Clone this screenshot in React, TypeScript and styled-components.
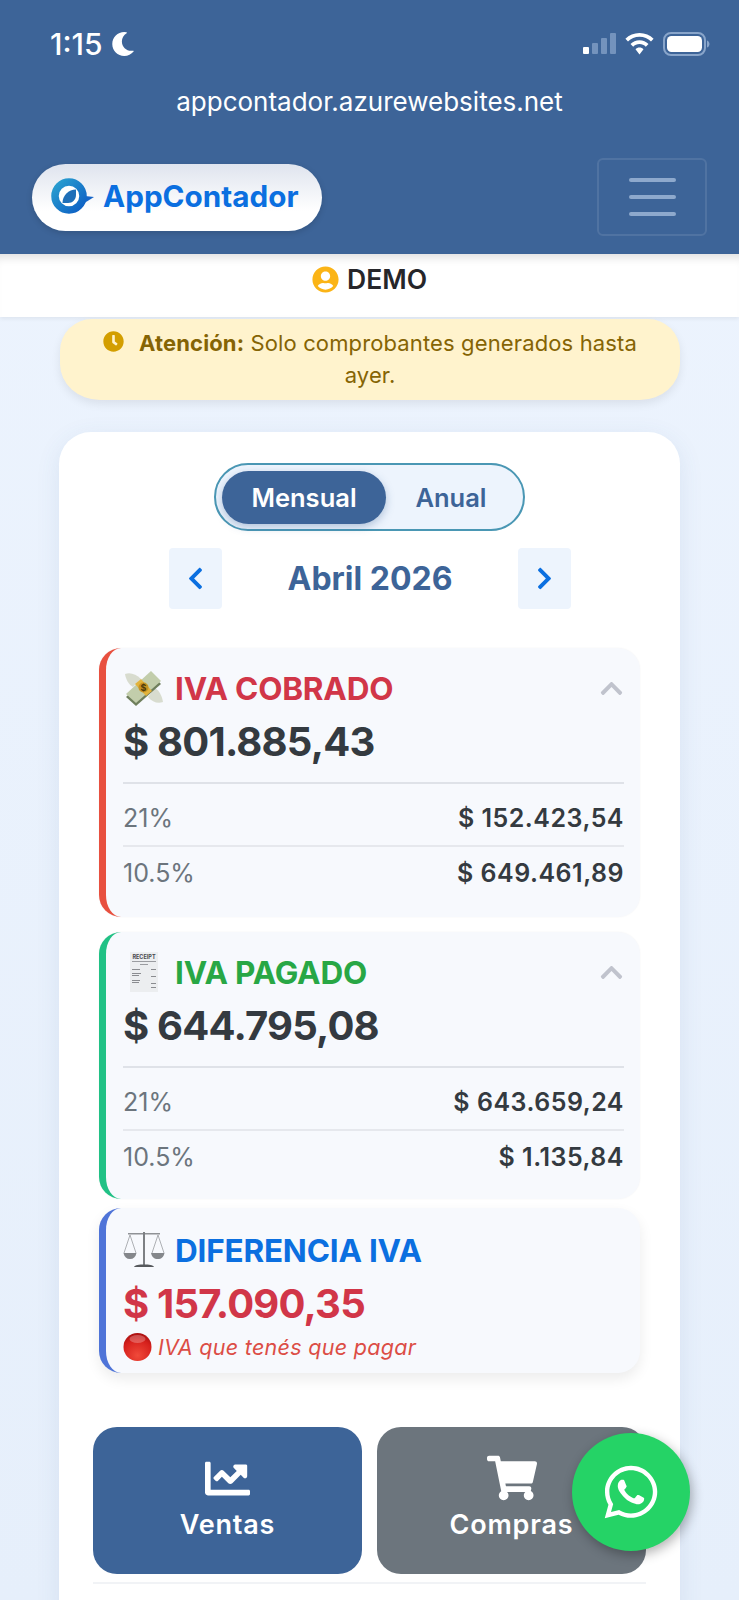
import React, { FC } from 'react';
import styled, { createGlobalStyle } from 'styled-components';
import {
  FaChartLine,
  FaChevronLeft,
  FaChevronRight,
  FaChevronUp,
  FaClock,
  FaMoon,
  FaShoppingCart,
  FaUserCircle,
  FaWhatsapp,
} from 'react-icons/fa';

const GlobalStyle = createGlobalStyle`
  html, body {
    margin: 0;
    padding: 0;
    height: 1600px;
    overflow: hidden;
    background: #eaf2fd;
    font-family: Inter, "Liberation Sans", sans-serif;
  }
  * { box-sizing: border-box; }
`;

const Page = styled.div`
  position: relative;
  width: 739px;
  height: 1600px;
  overflow: hidden;
  background: linear-gradient(180deg, #edf4fe 0%, #e6effb 100%);
`;

/* Header */
const Header = styled.header`
  height: 254px;
  background: #3d6498;
  color: #fff;
  padding: 28px 32px 0;
`;

const StatusBar = styled.div`
  height: 32px;
  display: flex;
  align-items: center;
  justify-content: space-between;
  padding: 0 0 0 18px;
  margin-right: -3px;
`;

const Clock = styled.div`
  display: flex;
  align-items: center;
  gap: 8px;
  font-size: 30px;
  font-weight: 500;
  letter-spacing: 0;
`;

const StatusIcons = styled.div`
  display: flex;
  align-items: center;
  gap: 9px;
`;

const Url = styled.div`
  margin-top: 26px;
  text-align: center;
  font-size: 26px;
  line-height: 32px;
  font-weight: 400;
`;

const NavRow = styled.div`
  margin-top: 40px;
  display: flex;
  align-items: flex-start;
  justify-content: space-between;
`;

const Brand = styled.div`
  margin-top: 6px;
  width: 290px;
  height: 67px;
  border-radius: 34px;
  display: flex;
  align-items: center;
  gap: 8px;
  padding: 0 0 3px 19px;
  background: linear-gradient(180deg, #dfe4ee 0%, #fff 70%);
  box-shadow: 0 2px 6px rgba(0, 0, 0, 0.15);
`;

const BrandName = styled.span`
  color: #0b6fe0;
  font-size: 29.7px;
  font-weight: 700;
`;

const Toggler = styled.div`
  width: 110px;
  height: 78px;
  display: flex;
  flex-direction: column;
  align-items: center;
  justify-content: center;
  gap: 13px;
  border: 2px solid rgba(255, 255, 255, 0.1);
  border-radius: 6px;
`;

const TogglerLine = styled.span`
  width: 47px;
  height: 4px;
  border-radius: 2px;
  background: #8ea9cd;
`;

const UserBar = styled.div`
  height: 63px;
  background: #fff;
  display: flex;
  align-items: center;
  justify-content: center;
  gap: 8px;
  padding-bottom: 13px;
  font-size: 26.5px;
  font-weight: 600;
  color: #26262a;
  box-shadow: inset 0 10px 8px -6px rgba(0, 0, 0, 0.12), 0 2px 4px rgba(0, 0, 0, 0.06);
  svg {
    color: #fbb416;
    font-size: 27px;
  }
`;

const Notice = styled.div`
  margin: 2px 59px 0 60px;
  height: 81px;
  padding: 8px 30px 0;
  background: #fff3cd;
  border-radius: 0 0 40px 40px / 0 0 36px 36px;
  border-top-left-radius: 32px;
  border-top-right-radius: 32px;
  box-shadow: 0 4px 10px rgba(0, 0, 0, 0.08);
  color: #856404;
  font-size: 22px;
  line-height: 32px;
  letter-spacing: 0.13px;
  text-align: center;
  svg {
    color: #d39e00;
    font-size: 21px;
    margin-right: 15px;
    vertical-align: -1px;
  }
  b {
    font-weight: 700;
  }
`;

/* Main panel */
const Panel = styled.main`
  margin: 32px 59px 0;
  padding: 31px 34px 0;
  height: 1200px;
  background: #fff;
  border-radius: 32px;
  box-shadow: 0 6px 24px rgba(61, 100, 152, 0.1);
`;

const ModeSwitch = styled.div`
  width: 311px;
  height: 68px;
  margin: 0 auto;
  padding: 6px 6px;
  display: flex;
  align-items: center;
  border: 2px solid #4a97b4;
  border-radius: 34px;
  background: #edf4fd;
`;

const ModeButton = styled.div<{ $active?: boolean }>`
  height: 53px;
  width: ${(p) => (p.$active ? '164px' : '130px')};
  display: flex;
  align-items: center;
  justify-content: center;
  border-radius: 27px;
  font-size: 25.5px;
  font-weight: 600;
  color: ${(p) => (p.$active ? '#fff' : '#3d6498')};
  background: ${(p) => (p.$active ? '#3d6498' : 'transparent')};
  box-shadow: ${(p) => (p.$active ? '0 3px 8px rgba(61, 100, 152, 0.35)' : 'none')};
`;

const MonthNav = styled.div`
  margin: 17px 75px 0 76px;
  height: 61px;
  display: flex;
  align-items: center;
  justify-content: space-between;
`;

const MonthArrow = styled.div`
  width: 53px;
  height: 61px;
  border-radius: 4px;
  background: #edf4fd;
  color: #0b6fe0;
  font-size: 25px;
  display: flex;
  align-items: center;
  justify-content: center;
`;

const MonthLabel = styled.div`
  font-size: 32px;
  font-weight: 700;
  color: #3d6498;
`;

const SummaryCard = styled.section<{ $accent: string; $shadow?: boolean }>`
  position: relative;
  margin: 0 6px;
  padding: 0 16px 0 17px;
  background: #f7f9fd;
  border-left: 7px solid ${(p) => p.$accent};
  border-radius: 22px;
  box-shadow: ${(p) => (p.$shadow ? '0 6px 14px rgba(0, 0, 0, 0.08)' : '0 0 2px rgba(0, 0, 0, 0.05)')};
`;

const CobradoCard = styled(SummaryCard)`
  margin-top: 39px;
  height: 269px;
  padding-top: 22px;
`;

const PagadoCard = styled(SummaryCard)`
  margin-top: 15px;
  height: 267px;
  padding-top: 22px;
`;

const DiferenciaCard = styled(SummaryCard)`
  margin-top: 9px;
  height: 165px;
  padding-top: 24px;
`;

const CardTitleRow = styled.div`
  height: 36px;
  display: flex;
  align-items: center;
  gap: 6px;
`;

const EmojiBox = styled.span`
  width: 46px;
  height: 40px;
  flex: none;
  display: flex;
  align-items: center;
  justify-content: center;
  margin-left: -2px;
  margin-right: 2px;
`;

const CardTitle = styled.h3<{ $color: string }>`
  margin: 0;
  flex: 1;
  font-size: 31.5px;
  font-weight: 700;
  letter-spacing: -0.2px;
  color: ${(p) => p.$color};
`;

const Caret = styled.span`
  color: #c0c3cd;
  font-size: 25px;
  display: flex;
`;

const Amount = styled.div<{ $color?: string }>`
  margin-top: 11px;
  font-size: 40px;
  line-height: 50px;
  font-weight: 700;
  letter-spacing: -0.8px;
  color: ${(p) => p.$color ?? '#343a40'};
`;

const Breakdown = styled.div`
  margin-top: 15px;
  border-top: 2px solid #dfe2e8;
`;

const BreakdownRow = styled.div`
  height: 61px;
  padding-top: 7px;
  display: flex;
  align-items: center;
  justify-content: space-between;
  font-size: 25px;
  & + & {
    height: 52px;
    padding-top: 2px;
    border-top: 2px solid #e6e8ed;
  }
`;

const Rate = styled.span`
  color: #6c757d;
  font-weight: 400;
`;

const RateValue = styled.span`
  color: #343a40;
  font-weight: 600;
  letter-spacing: 0.5px;
`;

const Hint = styled.div`
  margin-top: 3px;
  display: flex;
  align-items: center;
  gap: 6px;
  font-size: 21.5px;
  line-height: 30px;
  font-style: italic;
  letter-spacing: 0.3px;
  color: #dc4d45;
`;

const Actions = styled.div`
  margin-top: 54px;
  display: grid;
  grid-template-columns: 269px 269px;
  justify-content: space-between;
  padding-bottom: 8px;
  border-bottom: 2px solid #f1f3f6;
`;

const ActionButton = styled.div<{ $bg: string }>`
  height: 147px;
  padding-top: 26px;
  border-radius: 24px;
  background: ${(p) => p.$bg};
  color: #fff;
  display: flex;
  flex-direction: column;
  align-items: center;
  gap: 6px;
  font-size: 27px;
  line-height: 32px;
  font-weight: 600;
  letter-spacing: 0.8px;
`;

const ActionIcon = styled.span`
  height: 50px;
  display: flex;
  align-items: center;
`;

const WhatsappFab = styled.div`
  position: absolute;
  left: 572px;
  top: 1433px;
  width: 118px;
  height: 118px;
  border-radius: 50%;
  background: #25d366;
  color: #fff;
  font-size: 60px;
  display: flex;
  align-items: center;
  justify-content: center;
  box-shadow: 2px 4px 12px rgba(0, 0, 0, 0.3);
`;

/* Drawings */
const SignalIcon: FC = () => (
  <svg width="33" height="22" viewBox="0 0 33 22">
    <rect x="0" y="14" width="6" height="7" rx="1" fill="#fff" />
    <rect x="9" y="10" width="6" height="11" rx="1" fill="#7493bd" />
    <rect x="18" y="5" width="6" height="16" rx="1" fill="#7493bd" />
    <rect x="27" y="0" width="6" height="21" rx="1" fill="#7493bd" />
  </svg>
);

const WifiIcon: FC = () => (
  <svg width="29" height="22" viewBox="0 0 29 22" fill="#fff">
    <path d="M14.5 0C9 0 4 2.2.4 5.8l2.6 2.7C6 5.6 10 3.8 14.5 3.8s8.500 1.800 11.500 4.700l2.600-2.700C25 2.200 20 0 14.500 0z" />
    <path d="M14.500 7.300c-3.500 0-6.700 1.400-9 3.700l2.700 2.700c1.600-1.600 3.800-2.600 6.300-2.600s4.700 1 6.300 2.600l2.700-2.700c-2.300-2.300-5.500-3.700-9-3.700z" />
    <path d="M14.500 14.500c-1.600 0-3 .6-4 1.700l4 5.300 4-5.300c-1-1.100-2.400-1.700-4-1.700z" />
  </svg>
);

const BatteryIcon: FC = () => (
  <svg width="47" height="24" viewBox="0 0 47 24">
    <rect x="1" y="1" width="41" height="22" rx="7" fill="none" stroke="#89a5ca" strokeWidth="2" />
    <rect x="4" y="4" width="35" height="16" rx="4.500" fill="#fff" />
    <path d="M44 8.500c1.600.5 2.500 2 2.500 3.500s-.9 3-2.500 3.500z" fill="#89a5ca" />
  </svg>
);

const LogoIcon: FC = () => (
  <svg width="44" height="36" viewBox="0 0 44 36">
    <defs>
      <linearGradient id="logoRing" x1="0" y1="0" x2="1" y2="1">
        <stop offset="0" stopColor="#2aa0d0" />
        <stop offset="1" stopColor="#0d5fc4" />
      </linearGradient>
    </defs>
    <path d="M27 29l16-10-9-1z" fill="#1565c8" />
    <circle cx="18" cy="18" r="14" fill="#fff" stroke="url(#logoRing)" strokeWidth="7.500" />
    <path d="M25 11.500v5.500c0 4.500-3.500 8-8 8h-5.500c0-7.500 6-13.500 13.500-13.500z" fill="#1f6fb8" />
  </svg>
);

const MoneyWingsEmoji: FC = () => (
  <svg width="42" height="38" viewBox="0 0 42 38">
    <path d="M2 5c5-2 11 0 16 5l-8 8C6 16 3 11 2 5z" fill="#d8dccf" />
    <path d="M40 33c-5 2-11 0-15-5l7-9c4 2 7 8 8 14z" fill="#d8dccf" />
    <path d="M3 28L28 5l10 10-25 22z" fill="#6f7f5c" />
    <path d="M3 25L28 2l10 10-25 22z" fill="#c2cdab" />
    <path d="M12 15l11 12 6-5-11-12z" fill="#e2b33c" />
    <circle cx="20.500" cy="18.500" r="5" fill="#c69222" />
    <text x="20.500" y="22" fontSize="9" fontWeight="700" fill="#4d3a0b" textAnchor="middle" fontFamily="Inter">$</text>
  </svg>
);

const ReceiptEmoji: FC = () => (
  <svg width="30" height="40" viewBox="0 0 28 40">
    <rect x="0" y="0" width="28" height="40" fill="#eceef0" />
    <text x="14" y="7" fontSize="5.500" fontWeight="700" fill="#4a4c50" textAnchor="middle" fontFamily="Inter">RECEIPT</text>
    <rect x="2" y="9" width="24" height="1" fill="#9a9ca0" />
    <rect x="10" y="12" width="8" height="1" fill="#9a9ca0" />
    <rect x="2" y="17" width="8" height="1" fill="#8a8c90" />
    <rect x="21" y="17" width="5" height="1" fill="#8a8c90" />
    <rect x="2" y="21" width="9" height="1" fill="#8a8c90" />
    <rect x="2" y="23" width="7" height="1" fill="#8a8c90" />
    <rect x="21" y="24" width="5" height="1" fill="#8a8c90" />
    <rect x="2" y="28" width="8" height="1" fill="#8a8c90" />
    <rect x="2" y="30" width="7" height="1" fill="#8a8c90" />
    <rect x="21" y="31" width="5" height="1" fill="#8a8c90" />
    <rect x="21" y="35" width="5" height="1" fill="#8a8c90" />
  </svg>
);

const ScaleEmoji: FC = () => (
  <svg width="42" height="38" viewBox="0 0 42 38" fill="none" stroke="#9a9da1" strokeWidth="0.800">
    <rect x="5" y="2" width="32" height="1.500" fill="#8f9296" stroke="none" />
    <rect x="20" y="1" width="2" height="33" fill="#7d8084" stroke="none" />
    <path d="M7 4L1 22M7 4l6 18M35 4l-6 18M35 4l6 18" />
    <path d="M0.500 22h13c-1 4-3 6-6.500 6S1.500 26 .5 22z" fill="#84878b" stroke="none" />
    <path d="M28 22h13.500c-1 4-3 6-6.750 6S29 26 28 22z" fill="#84878b" stroke="none" />
    <path d="M11 36c1-2 5-2.500 10-2.500S30 34 31 36z" fill="#55585c" stroke="none" />
  </svg>
);

const RedCircleEmoji: FC = () => (
  <svg width="29" height="28" viewBox="0 0 29 28">
    <defs>
      <radialGradient id="redDot" cx="0.500" cy="0.800" r="0.800">
        <stop offset="0" stopColor="#f04a3a" />
        <stop offset="0.700" stopColor="#d6201c" />
        <stop offset="1" stopColor="#a81010" />
      </radialGradient>
    </defs>
    <ellipse cx="14.500" cy="14" rx="14" ry="14" fill="url(#redDot)" />
    <ellipse cx="14.500" cy="6" rx="8" ry="4" fill="#fff" opacity="0.25" />
  </svg>
);

const App: FC = () => {
  return (
    <Page>
      <GlobalStyle />
      <Header>
        <StatusBar>
          <Clock>
            1:15 <FaMoon size={24} />
          </Clock>
          <StatusIcons>
            <SignalIcon />
            <WifiIcon />
            <BatteryIcon />
          </StatusIcons>
        </StatusBar>
        <Url>appcontador.azurewebsites.net</Url>
        <NavRow>
          <Brand>
            <LogoIcon />
            <BrandName>AppContador</BrandName>
          </Brand>
          <Toggler>
            <TogglerLine />
            <TogglerLine />
            <TogglerLine />
          </Toggler>
        </NavRow>
      </Header>

      <UserBar>
        <FaUserCircle />
        DEMO
      </UserBar>

      <Notice>
        <FaClock />
        <b>Atención:</b> Solo comprobantes generados hasta ayer.
      </Notice>

      <Panel>
        <ModeSwitch>
          <ModeButton $active>Mensual</ModeButton>
          <ModeButton>Anual</ModeButton>
        </ModeSwitch>

        <MonthNav>
          <MonthArrow>
            <FaChevronLeft />
          </MonthArrow>
          <MonthLabel>Abril 2026</MonthLabel>
          <MonthArrow>
            <FaChevronRight />
          </MonthArrow>
        </MonthNav>

        <CobradoCard $accent="#e8503f">
          <CardTitleRow>
            <EmojiBox>
              <MoneyWingsEmoji />
            </EmojiBox>
            <CardTitle $color="#d13648">IVA COBRADO</CardTitle>
            <Caret>
              <FaChevronUp />
            </Caret>
          </CardTitleRow>
          <Amount>$ 801.885,43</Amount>
          <Breakdown>
            <BreakdownRow>
              <Rate>21%</Rate>
              <RateValue>$ 152.423,54</RateValue>
            </BreakdownRow>
            <BreakdownRow>
              <Rate>10.5%</Rate>
              <RateValue>$ 649.461,89</RateValue>
            </BreakdownRow>
          </Breakdown>
        </CobradoCard>

        <PagadoCard $accent="#21c185">
          <CardTitleRow>
            <EmojiBox>
              <ReceiptEmoji />
            </EmojiBox>
            <CardTitle $color="#28a745">IVA PAGADO</CardTitle>
            <Caret>
              <FaChevronUp />
            </Caret>
          </CardTitleRow>
          <Amount>$ 644.795,08</Amount>
          <Breakdown>
            <BreakdownRow>
              <Rate>21%</Rate>
              <RateValue>$ 643.659,24</RateValue>
            </BreakdownRow>
            <BreakdownRow>
              <Rate>10.5%</Rate>
              <RateValue>$ 1.135,84</RateValue>
            </BreakdownRow>
          </Breakdown>
        </PagadoCard>

        <DiferenciaCard $accent="#4f74d8" $shadow>
          <CardTitleRow>
            <EmojiBox>
              <ScaleEmoji />
            </EmojiBox>
            <CardTitle $color="#0b6fe0">DIFERENCIA IVA</CardTitle>
          </CardTitleRow>
          <Amount $color="#d13648">$ 157.090,35</Amount>
          <Hint>
            <RedCircleEmoji />
            IVA que tenés que pagar
          </Hint>
        </DiferenciaCard>

        <Actions>
          <ActionButton $bg="#3d6498">
            <ActionIcon>
              <FaChartLine size={45} />
            </ActionIcon>
            Ventas
          </ActionButton>
          <ActionButton $bg="#6c757d">
            <ActionIcon>
              <FaShoppingCart size={50} />
            </ActionIcon>
            Compras
          </ActionButton>
        </Actions>
      </Panel>

      <WhatsappFab>
        <FaWhatsapp />
      </WhatsappFab>
    </Page>
  );
};

export default App;
